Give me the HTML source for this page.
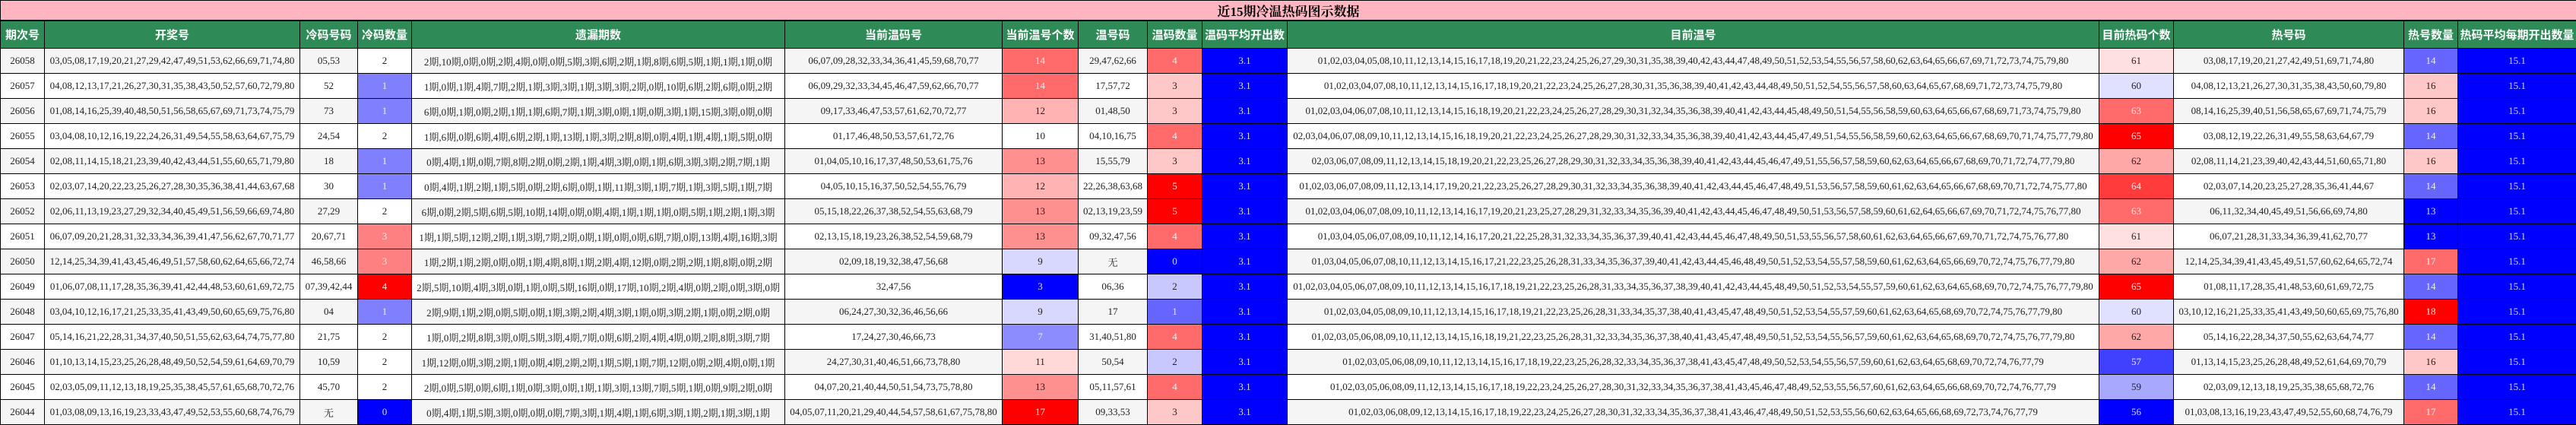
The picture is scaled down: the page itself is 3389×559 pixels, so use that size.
<!DOCTYPE html>
<html><head><meta charset="utf-8"><style>
html,body{margin:0;padding:0;background:#fff;}
body{width:3389px;height:558px;overflow:hidden;}
table{border-collapse:collapse;table-layout:fixed;width:3389px;font-family:"Liberation Serif","Noto Serif CJK SC","Noto Sans CJK SC",serif;font-size:13px;color:#222;}
td,th{border:1px solid #000;text-align:center;white-space:nowrap;overflow:hidden;padding:0;}
.t td{background:#ffb6c1;height:24px;font-weight:bold;font-size:17px;font-family:"Liberation Serif","Noto Serif CJK SC",serif;color:#000;border-bottom:2px solid #000;}
.h th{background:#2e8b57;color:#fff;height:35px;font-size:15px;font-family:"Liberation Sans","Noto Sans CJK SC",sans-serif;font-weight:bold;}
tr.d td{height:32px;}
tr.o td{background:#f5f5f5;}
tr.e td{background:#fff;}
tr.d td.w{background:#fff;}
tr.d td.c1{background:#8080ff;color:#eee;}
tr.d td.c3{background:#ff8080;color:#eee;}
tr.d td.rd{background:#ff0000;color:#eee;}
tr.d td.bl{background:#0000ff;color:#ddd;}
tr.d td.r66{background:#ff6b6b;color:#eee;}
tr.d td.rb3{background:#ffb3b3;}
tr.d td.r90{background:#ff9090;}
tr.d td.rc8{background:#ffc8c8;}
tr.d td.rd6{background:#ffd8d8;}
tr.d td.re0{background:#ffe0e0;}
tr.d td.ra8{background:#ffa8a8;}
tr.d td.r3b{background:#ff3b3b;color:#eee;}
tr.d td.bd8{background:#d8d8ff;}
tr.d td.bc8{background:#c8c8ff;}
tr.d td.be0{background:#e0e0ff;}
tr.d td.b66{background:#6666ff;color:#eee;}
tr.d td.b8c{background:#8c8cff;color:#eee;}
tr.d td.b40{background:#4040ff;color:#eee;}
tr.d td.ba8{background:#a8a8ff;}
</style></head><body>
<table>
<colgroup><col style="width:58px"><col style="width:336px"><col style="width:76px"><col style="width:71px"><col style="width:491px"><col style="width:286px"><col style="width:100px"><col style="width:91px"><col style="width:72px"><col style="width:112px"><col style="width:1068px"><col style="width:98px"><col style="width:303px"><col style="width:71px"><col style="width:156px"></colgroup>
<tr class="t"><td colspan="15">近15期冷温热码图示数据</td></tr>
<tr class="h"><th>期次号</th><th>开奖号</th><th>冷码号码</th><th>冷码数量</th><th>遗漏期数</th><th>当前温码号</th><th>当前温号个数</th><th>温号码</th><th>温码数量</th><th>温码平均开出数</th><th>目前温号</th><th>目前热码个数</th><th>热号码</th><th>热号数量</th><th>热码平均每期开出数量</th></tr>
<tr class="d o"><td>26058</td><td>03,05,08,17,19,20,21,27,29,42,47,49,51,53,62,66,69,71,74,80</td><td>05,53</td><td class="w">2</td><td>2期,10期,0期,0期,2期,4期,0期,0期,5期,3期,6期,2期,1期,8期,6期,5期,1期,1期,1期,0期</td><td>06,07,09,28,32,33,34,36,41,45,59,68,70,77</td><td class="r66">14</td><td>29,47,62,66</td><td class="r66">4</td><td class="bl">3.1</td><td>01,02,03,04,05,08,10,11,12,13,14,15,16,17,18,19,20,21,22,23,24,25,26,27,29,30,31,35,38,39,40,42,43,44,47,48,49,50,51,52,53,54,55,56,57,58,60,62,63,64,65,66,67,69,71,72,73,74,75,79,80</td><td class="re0">61</td><td>03,08,17,19,20,21,27,42,49,51,69,71,74,80</td><td class="b66">14</td><td class="bl">15.1</td></tr>
<tr class="d e"><td>26057</td><td>04,08,12,13,17,21,26,27,30,31,35,38,43,50,52,57,60,72,79,80</td><td>52</td><td class="c1">1</td><td>1期,0期,1期,4期,7期,2期,1期,3期,3期,1期,3期,3期,2期,0期,10期,6期,2期,6期,0期,2期</td><td>06,09,29,32,33,34,45,46,47,59,62,66,70,77</td><td class="r66">14</td><td>17,57,72</td><td class="rc8">3</td><td class="bl">3.1</td><td>01,02,03,04,07,08,10,11,12,13,14,15,16,17,18,19,20,21,22,23,24,25,26,27,28,30,31,35,36,38,39,40,41,42,43,44,48,49,50,51,52,54,55,56,57,58,60,63,64,65,67,68,69,71,72,73,74,75,79,80</td><td class="be0">60</td><td>04,08,12,13,21,26,27,30,31,35,38,43,50,60,79,80</td><td class="rc8">16</td><td class="bl">15.1</td></tr>
<tr class="d o"><td>26056</td><td>01,08,14,16,25,39,40,48,50,51,56,58,65,67,69,71,73,74,75,79</td><td>73</td><td class="c1">1</td><td>6期,0期,1期,0期,2期,1期,1期,6期,7期,1期,3期,0期,1期,0期,3期,1期,15期,3期,0期,0期</td><td>09,17,33,46,47,53,57,61,62,70,72,77</td><td class="rb3">12</td><td>01,48,50</td><td class="rc8">3</td><td class="bl">3.1</td><td>01,02,03,04,06,07,08,10,11,12,13,14,15,16,18,19,20,21,22,23,24,25,26,27,28,29,30,31,32,34,35,36,38,39,40,41,42,43,44,45,48,49,50,51,54,55,56,58,59,60,63,64,65,66,67,68,69,71,73,74,75,79,80</td><td class="r66">63</td><td>08,14,16,25,39,40,51,56,58,65,67,69,71,74,75,79</td><td class="rc8">16</td><td class="bl">15.1</td></tr>
<tr class="d e"><td>26055</td><td>03,04,08,10,12,16,19,22,24,26,31,49,54,55,58,63,64,67,75,79</td><td>24,54</td><td class="w">2</td><td>1期,6期,0期,6期,4期,6期,2期,1期,13期,1期,3期,2期,8期,0期,4期,1期,4期,1期,5期,0期</td><td>01,17,46,48,50,53,57,61,72,76</td><td class="w">10</td><td>04,10,16,75</td><td class="r66">4</td><td class="bl">3.1</td><td>02,03,04,06,07,08,09,10,11,12,13,14,15,16,18,19,20,21,22,23,24,25,26,27,28,29,30,31,32,33,34,35,36,38,39,40,41,42,43,44,45,47,49,51,54,55,56,58,59,60,62,63,64,65,66,67,68,69,70,71,74,75,77,79,80</td><td class="rd">65</td><td>03,08,12,19,22,26,31,49,55,58,63,64,67,79</td><td class="b66">14</td><td class="bl">15.1</td></tr>
<tr class="d o"><td>26054</td><td>02,08,11,14,15,18,21,23,39,40,42,43,44,51,55,60,65,71,79,80</td><td>18</td><td class="c1">1</td><td>0期,4期,1期,0期,7期,8期,2期,0期,2期,1期,4期,3期,0期,1期,6期,3期,3期,2期,7期,1期</td><td>01,04,05,10,16,17,37,48,50,53,61,75,76</td><td class="r90">13</td><td>15,55,79</td><td class="rc8">3</td><td class="bl">3.1</td><td>02,03,06,07,08,09,11,12,13,14,15,18,19,20,21,22,23,25,26,27,28,29,30,31,32,33,34,35,36,38,39,40,41,42,43,44,45,46,47,49,51,55,56,57,58,59,60,62,63,64,65,66,67,68,69,70,71,72,74,77,79,80</td><td class="ra8">62</td><td>02,08,11,14,21,23,39,40,42,43,44,51,60,65,71,80</td><td class="rc8">16</td><td class="bl">15.1</td></tr>
<tr class="d e"><td>26053</td><td>02,03,07,14,20,22,23,25,26,27,28,30,35,36,38,41,44,63,67,68</td><td>30</td><td class="c1">1</td><td>0期,4期,1期,2期,1期,5期,0期,2期,6期,0期,1期,11期,3期,1期,7期,1期,3期,5期,1期,7期</td><td>04,05,10,15,16,37,50,52,54,55,76,79</td><td class="rb3">12</td><td>22,26,38,63,68</td><td class="rd">5</td><td class="bl">3.1</td><td>01,02,03,06,07,08,09,11,12,13,14,17,19,20,21,22,23,25,26,27,28,29,30,31,32,33,34,35,36,38,39,40,41,42,43,44,45,46,47,48,49,51,53,56,57,58,59,60,61,62,63,64,65,66,67,68,69,70,71,72,74,75,77,80</td><td class="r3b">64</td><td>02,03,07,14,20,23,25,27,28,35,36,41,44,67</td><td class="b66">14</td><td class="bl">15.1</td></tr>
<tr class="d o"><td>26052</td><td>02,06,11,13,19,23,27,29,32,34,40,45,49,51,56,59,66,69,74,80</td><td>27,29</td><td class="w">2</td><td>6期,0期,2期,5期,6期,5期,10期,14期,0期,0期,4期,1期,1期,1期,0期,5期,1期,2期,1期,3期</td><td>05,15,18,22,26,37,38,52,54,55,63,68,79</td><td class="r90">13</td><td>02,13,19,23,59</td><td class="rd">5</td><td class="bl">3.1</td><td>01,02,03,04,06,07,08,09,10,11,12,13,14,16,17,19,20,21,23,25,27,28,29,31,32,33,34,35,36,39,40,41,42,43,44,45,46,47,48,49,50,51,53,56,57,58,59,60,61,62,64,65,66,67,69,70,71,72,74,75,76,77,80</td><td class="r66">63</td><td>06,11,32,34,40,45,49,51,56,66,69,74,80</td><td class="bl">13</td><td class="bl">15.1</td></tr>
<tr class="d e"><td>26051</td><td>06,07,09,20,21,28,31,32,33,34,36,39,41,47,56,62,67,70,71,77</td><td>20,67,71</td><td class="c3">3</td><td>1期,1期,5期,12期,2期,1期,3期,7期,2期,0期,1期,0期,0期,6期,7期,0期,13期,4期,16期,3期</td><td>02,13,15,18,19,23,26,38,52,54,59,68,79</td><td class="r90">13</td><td>09,32,47,56</td><td class="r66">4</td><td class="bl">3.1</td><td>01,03,04,05,06,07,08,09,10,11,12,14,16,17,20,21,22,25,28,31,32,33,34,35,36,37,39,40,41,42,43,44,45,46,47,48,49,50,51,53,55,56,57,58,60,61,62,63,64,65,66,67,69,70,71,72,74,75,76,77,80</td><td class="re0">61</td><td>06,07,21,28,31,33,34,36,39,41,62,70,77</td><td class="bl">13</td><td class="bl">15.1</td></tr>
<tr class="d o"><td>26050</td><td>12,14,25,34,39,41,43,45,46,49,51,57,58,60,62,64,65,66,72,74</td><td>46,58,66</td><td class="c3">3</td><td>1期,2期,1期,2期,0期,0期,1期,4期,8期,1期,2期,4期,12期,0期,2期,2期,1期,8期,0期,2期</td><td>02,09,18,19,32,38,47,56,68</td><td class="bd8">9</td><td>无</td><td class="bl">0</td><td class="bl">3.1</td><td>01,03,04,05,06,07,08,10,11,12,13,14,15,16,17,21,22,23,25,26,28,31,33,34,35,36,37,39,40,41,42,43,44,45,46,48,49,50,51,52,53,54,55,57,58,59,60,61,62,63,64,65,66,69,70,72,74,75,76,77,79,80</td><td class="ra8">62</td><td>12,14,25,34,39,41,43,45,49,51,57,60,62,64,65,72,74</td><td class="r66">17</td><td class="bl">15.1</td></tr>
<tr class="d e"><td>26049</td><td>01,06,07,08,11,17,28,35,36,39,41,42,44,48,53,60,61,69,72,75</td><td>07,39,42,44</td><td class="rd">4</td><td>2期,5期,10期,4期,3期,0期,1期,0期,5期,16期,0期,17期,10期,2期,4期,0期,2期,0期,3期,0期</td><td>32,47,56</td><td class="bl">3</td><td>06,36</td><td class="bc8">2</td><td class="bl">3.1</td><td>01,02,03,04,05,06,07,08,09,10,11,12,13,14,15,16,17,18,19,21,22,23,25,26,28,31,33,34,35,36,37,38,39,40,41,42,43,44,45,48,49,50,51,52,53,54,55,57,59,60,61,62,63,64,65,68,69,70,72,74,75,76,77,79,80</td><td class="rd">65</td><td>01,08,11,17,28,35,41,48,53,60,61,69,72,75</td><td class="b66">14</td><td class="bl">15.1</td></tr>
<tr class="d o"><td>26048</td><td>03,04,10,12,16,17,21,25,33,35,41,43,49,50,60,65,69,75,76,80</td><td>04</td><td class="c1">1</td><td>2期,9期,1期,2期,0期,5期,0期,1期,3期,2期,4期,3期,1期,0期,3期,2期,1期,0期,2期,0期</td><td>06,24,27,30,32,36,46,56,66</td><td class="bd8">9</td><td>17</td><td class="b66">1</td><td class="bl">3.1</td><td>01,02,03,04,05,08,09,10,11,12,13,14,15,16,17,18,19,21,22,23,25,26,28,31,33,34,35,37,38,40,41,43,45,47,48,49,50,51,52,53,54,55,57,59,60,61,62,63,64,65,68,69,70,72,74,75,76,77,79,80</td><td class="be0">60</td><td>03,10,12,16,21,25,33,35,41,43,49,50,60,65,69,75,76,80</td><td class="rd">18</td><td class="bl">15.1</td></tr>
<tr class="d e"><td>26047</td><td>05,14,16,21,22,28,31,34,37,40,50,51,55,62,63,64,74,75,77,80</td><td>21,75</td><td class="w">2</td><td>1期,0期,2期,8期,3期,0期,5期,3期,4期,7期,0期,6期,2期,4期,4期,0期,2期,8期,3期,7期</td><td>17,24,27,30,46,66,73</td><td class="b8c">7</td><td>31,40,51,80</td><td class="r66">4</td><td class="bl">3.1</td><td>01,02,03,05,06,08,09,10,11,12,13,14,15,16,18,19,21,22,23,25,26,28,31,32,33,34,35,36,37,38,40,41,43,45,47,48,49,50,51,52,53,54,55,56,57,59,60,61,62,63,64,65,68,69,70,72,74,75,76,77,79,80</td><td class="ra8">62</td><td>05,14,16,22,28,34,37,50,55,62,63,64,74,77</td><td class="b66">14</td><td class="bl">15.1</td></tr>
<tr class="d o"><td>26046</td><td>01,10,13,14,15,23,25,26,28,48,49,50,52,54,59,61,64,69,70,79</td><td>10,59</td><td class="w">2</td><td>1期,12期,0期,3期,2期,1期,0期,4期,2期,2期,1期,5期,1期,7期,12期,0期,2期,4期,0期,1期</td><td>24,27,30,31,40,46,51,66,73,78,80</td><td class="rd6">11</td><td>50,54</td><td class="bc8">2</td><td class="bl">3.1</td><td>01,02,03,05,06,08,09,10,11,12,13,14,15,16,17,18,19,22,23,25,26,28,32,33,34,35,36,37,38,41,43,45,47,48,49,50,52,53,54,55,56,57,59,60,61,62,63,64,65,68,69,70,72,74,76,77,79</td><td class="b40">57</td><td>01,13,14,15,23,25,26,28,48,49,52,61,64,69,70,79</td><td class="rc8">16</td><td class="bl">15.1</td></tr>
<tr class="d e"><td>26045</td><td>02,03,05,09,11,12,13,18,19,25,35,38,45,57,61,65,68,70,72,76</td><td>45,70</td><td class="w">2</td><td>2期,0期,5期,0期,6期,1期,0期,3期,0期,1期,1期,3期,13期,7期,5期,1期,0期,9期,2期,0期</td><td>04,07,20,21,40,44,50,51,54,73,75,78,80</td><td class="r90">13</td><td>05,11,57,61</td><td class="r66">4</td><td class="bl">3.1</td><td>01,02,03,05,06,08,09,11,12,13,14,15,16,17,18,19,22,23,24,25,26,27,28,30,31,32,33,34,35,36,37,38,41,43,45,46,47,48,49,52,53,55,56,57,60,61,62,63,64,65,66,68,69,70,72,74,76,77,79</td><td class="ba8">59</td><td>02,03,09,12,13,18,19,25,35,38,65,68,72,76</td><td class="b66">14</td><td class="bl">15.1</td></tr>
<tr class="d o"><td>26044</td><td>01,03,08,09,13,16,19,23,33,43,47,49,52,53,55,60,68,74,76,79</td><td>无</td><td class="bl">0</td><td>0期,4期,1期,5期,3期,0期,0期,0期,7期,3期,1期,4期,1期,6期,3期,1期,2期,1期,3期,1期</td><td>04,05,07,11,20,21,29,40,44,54,57,58,61,67,75,78,80</td><td class="rd">17</td><td>09,33,53</td><td class="rc8">3</td><td class="bl">3.1</td><td>01,02,03,06,08,09,12,13,14,15,16,17,18,19,22,23,24,25,26,27,28,30,31,32,33,34,35,36,37,38,41,43,46,47,48,49,50,51,52,53,55,56,60,62,63,64,65,66,68,69,72,73,74,76,77,79</td><td class="bl">56</td><td>01,03,08,13,16,19,23,43,47,49,52,55,60,68,74,76,79</td><td class="r66">17</td><td class="bl">15.1</td></tr>
</table>
</body></html>
